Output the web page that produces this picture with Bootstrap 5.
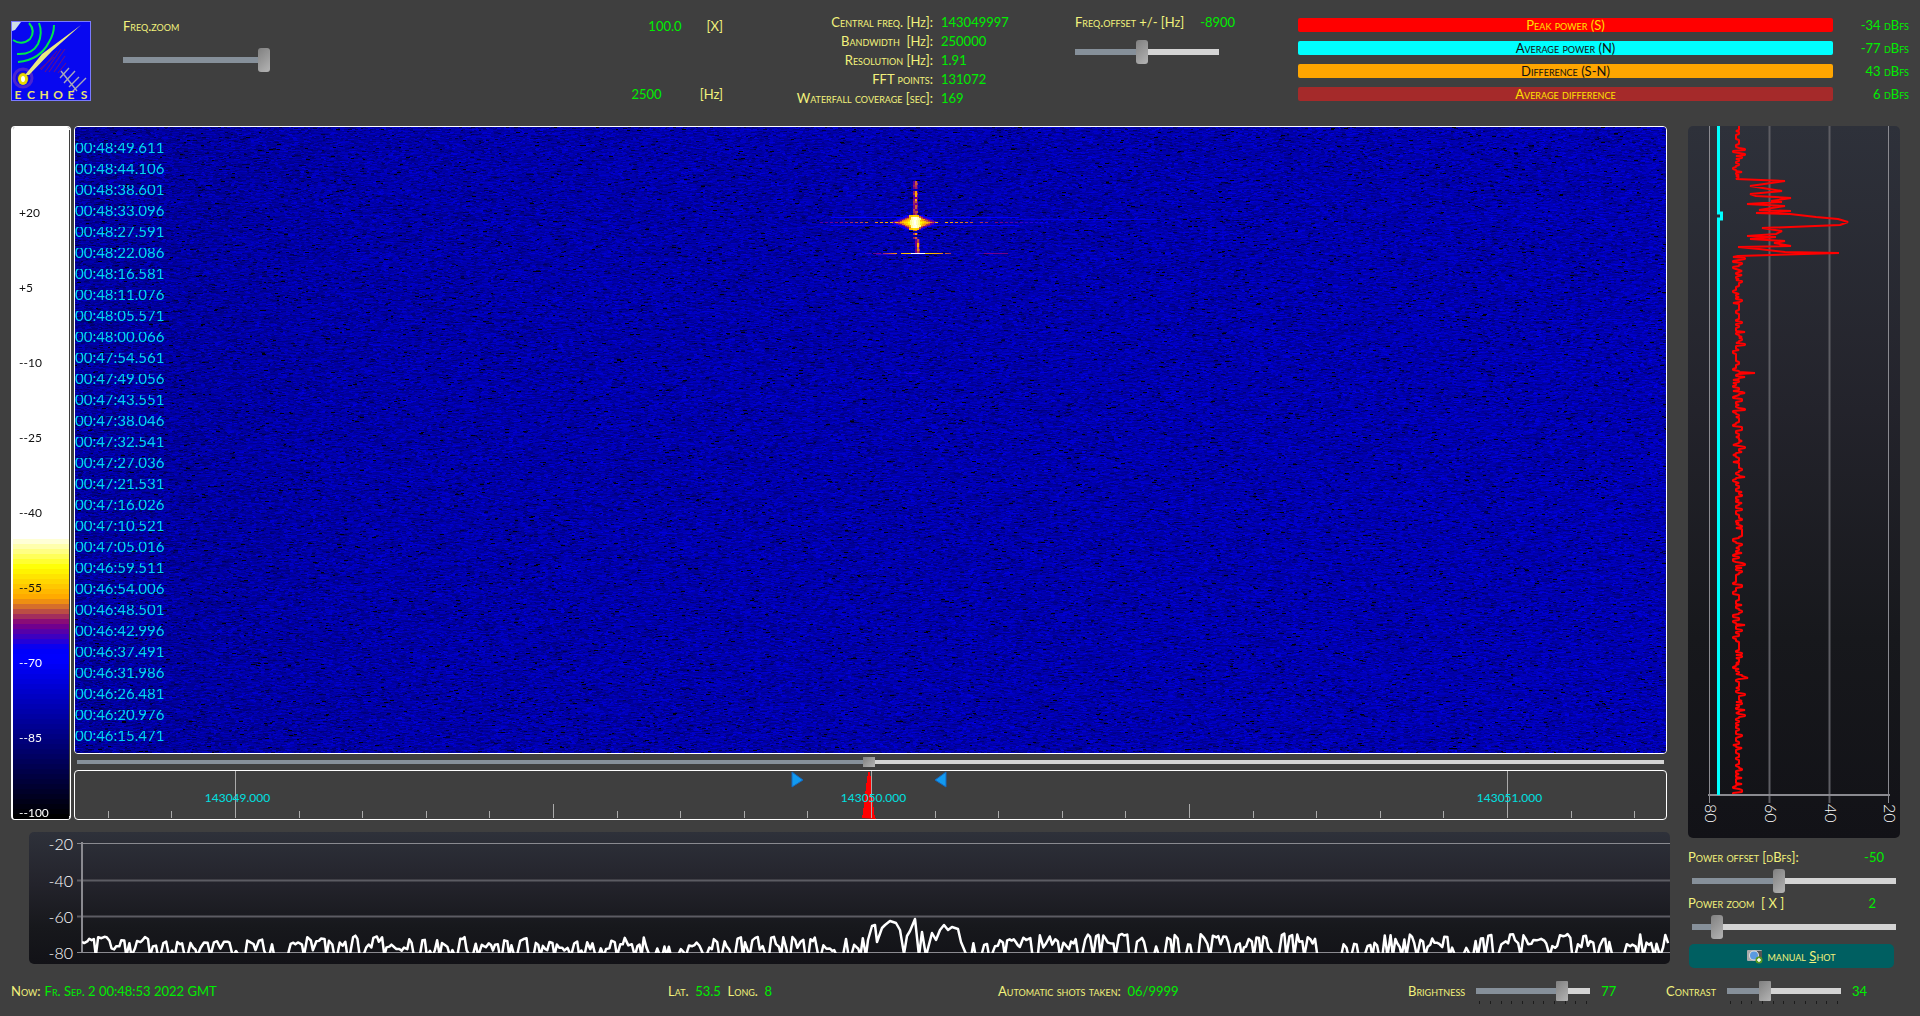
<!DOCTYPE html>
<html lang="en">
<head>
<meta charset="utf-8">
<meta name="viewport" content="width=device-width, initial-scale=1">
<title>Echoes</title>
<link rel="stylesheet" href="https://cdn.jsdelivr.net/npm/bootstrap@5.3.0/dist/css/bootstrap.min.css">
<style>
body{background:#3f3f3f;color:#f2f27c;font-family:Lato,sans-serif;font-size:13px;line-height:20px}
.cap{font-variant:small-caps;white-space:pre}
.val{color:#00ee00}
.top-bar{display:grid;grid-template-columns:112px 600fr 352fr 223fr 611fr;height:126px;padding:0 11px}
.logo{width:80px;height:80px;margin-top:21px}
.info-list{padding-top:13px}
.info-line{line-height:19px}
.info-name{width:210px;text-align:right}
.meter{height:14px;line-height:14px;border-radius:2px;width:535px;flex-shrink:1;text-align:center}
.meter-peak{background:#f00;color:#ffe000}
.meter-avg{background:#0ff;color:#111}
.meter-diff{background:#ffa500;color:#111}
.meter-avgdiff{background:#a52a2a;color:#ffe000}
.meter-list{padding-top:18px;gap:9px}
.meter-val{line-height:14px}
.zoom-vals{padding:16px 0 22px}
.gap-mid{width:38px}.gap-small{width:25px}
.slide{appearance:none;-webkit-appearance:none;display:block;width:100%;height:24px;margin:0;background:linear-gradient(90deg,#86909a var(--p),#d4d4d4 var(--p)) center/100% 6px no-repeat}
.slide::-webkit-slider-thumb{-webkit-appearance:none;width:12px;height:24px;border-radius:3px;background:linear-gradient(135deg,#808080,#b4b4b4)}
.slide-short{height:20px}
.slide-short::-webkit-slider-thumb{height:20px;border-radius:1px}
.slide-thin{height:10px;background-size:100% 4px}
.slide-thin::-webkit-slider-thumb{height:10px;border-radius:0}
.w-zoom{width:147px}
.w-zoom .slide{margin-top:12px}
.w-foot{width:114px;padding-top:3px}
.offset-box{padding-top:12px}
.offset-box .slide{margin-top:8px;width:144px}
.tick-row{height:3px;padding:0 3px}
.tick-row i{width:1px;background:#1c1c1c}
.wf-row{gap:3px;margin-right:5px;padding-left:11px}
.wf-col>.slide-thin{width:auto;margin:3px}
.frame{border:1px solid #fff;border-radius:4px;overflow:hidden;position:relative}
.frame canvas,.frame svg,.plot svg{position:absolute;top:0;left:0;width:100%;height:100%;display:block}
.scale-box{width:60px;border-width:1px 1px 1px 2px}
.scale-text{position:absolute;left:6px;line-height:20px;color:#111;font-size:12px;transform:translateY(-50%)}
.scale-text.pale{color:#fff}
.times{position:relative;padding-top:16px;color:#00d8f0;font-size:15px}
.times li{height:10px;line-height:8px;margin-bottom:11px;overflow:hidden}
.ruler{height:50px}
.plot{position:relative;border-radius:5px;overflow:hidden;background:linear-gradient(#2e313a,#23232b 40%,#17181c 72%,#121217)}
.plot-low{height:132px;margin:12px 2px 6px 29px}
.side{width:212px;margin-right:20px}
.side-ctl{padding:9px 0 2px}
.ctl-slide{padding:2px 4px 0}
.btn-shot{height:24px;width:205px;margin:5px 0 0 1px;padding:0;background:#005f61;color:#f2f27c;border:0;border-radius:5px;font-size:13px;line-height:20px}
.btn-shot:hover{background:#007072;color:#f2f27c}
.foot{display:grid;grid-template-columns:657fr 330fr 410fr 258fr 243fr;height:46px;padding:0 11px 4px;align-items:center}
.foot-ctl{gap:11px}
</style>
<script src="https://cdn.jsdelivr.net/npm/bootstrap@5.3.0/dist/js/bootstrap.bundle.min.js"></script>
</head>
<body class="d-flex flex-column min-vh-100">

<header class="top-bar">
  <svg class="logo" viewBox="0 0 80 80" role="img" aria-label="Echoes">
    <rect width="80" height="80" fill="#7a7aff"/><rect x="1" y="1" width="78" height="78" fill="#0808f0"/>
    <path d="M1 10V1H10L4 9Z" fill="#cfe0e8"/>
    <path d="M2 19q9 6 17-1q6-8-1-16M6 33q15 1 21-10q5-11 1-21M7 41q22-2 31-20q5-8 5-17" fill="none" stroke="#00e64d" stroke-width="2"/>
    <path d="M43 36L29 48M46 30L30 49M50 28L34 51M54 28L38 51M54 35L43 51M55 42L47 52" stroke="#70107c" stroke-width="1"/>
    <circle cx="12" cy="57" r="9" fill="none" stroke="#4a24d0" stroke-width="3"/><circle cx="12" cy="57" r="6" fill="#3a20a0"/>
    <path d="M70 4L31 33L14 54L18 54L41 30Z" fill="#e8e884"/>
    <ellipse cx="12" cy="58" rx="5" ry="6" fill="#e6d800"/><ellipse cx="12" cy="58" rx="2" ry="3" fill="#fff"/>
    <path d="M50 50L66 70M49 57L58 47M53 62L64 50M58 66L68 56M61 71L75 57" fill="none" stroke="#a8a8b8" stroke-width="1.4"/>
    <g font-family="Lato" font-weight="700" font-size="12" fill="#e8e070" text-anchor="middle"><text x="7" y="78">E</text><text x="20" y="78">C</text><text x="33" y="78">H</text><text x="47" y="78">O</text><text x="60" y="78">E</text><text x="73" y="78">S</text></g>
  </svg>
  <div class="d-flex justify-content-between">
    <div class="w-zoom">
      <label class="cap d-block mt-3" for="fz">Freq.zoom</label>
      <input class="slide" id="fz" type="range" min="0" max="100" value="100" style="--p:95%">
    </div>
    <div class="d-flex flex-column justify-content-between zoom-vals">
      <div class="d-flex justify-content-end"><span class="val">100.0</span><span class="gap-small"></span><span>[X]</span></div>
      <div class="d-flex justify-content-end"><span class="val">2500</span><span class="gap-mid"></span><span>[Hz]</span></div>
    </div>
  </div>
  <div class="info-list">
    <div class="d-flex info-line"><span class="cap info-name">Central freq. [Hz]:</span><span class="val ms-2">143049997</span></div>
    <div class="d-flex info-line"><span class="cap info-name">Bandwidth  [Hz]:</span><span class="val ms-2">250000</span></div>
    <div class="d-flex info-line"><span class="cap info-name">Resolution [Hz]:</span><span class="val ms-2">1.91</span></div>
    <div class="d-flex info-line"><span class="cap info-name">FFT points:</span><span class="val ms-2">131072</span></div>
    <div class="d-flex info-line"><span class="cap info-name">Waterfall coverage [sec]:</span><span class="val ms-2">169</span></div>
  </div>
  <div class="offset-box">
    <div class="d-flex gap-3"><label class="cap" for="fo">Freq.offset +/- [Hz]</label><span class="val">-8900</span></div>
    <input class="slide" id="fo" type="range" min="0" max="100" value="46" style="--p:46%">
  </div>
  <div class="d-flex flex-column meter-list">
    <div class="d-flex justify-content-between"><div class="meter meter-peak cap">Peak power (S)</div><span class="val cap meter-val">-34 dBfs</span></div>
    <div class="d-flex justify-content-between"><div class="meter meter-avg cap">Average power (N)</div><span class="val cap meter-val">-77 dBfs</span></div>
    <div class="d-flex justify-content-between"><div class="meter meter-diff cap">Difference (S-N)</div><span class="val cap meter-val">43 dBfs</span></div>
    <div class="d-flex justify-content-between"><div class="meter meter-avgdiff cap">Average difference</div><span class="val cap meter-val">6 dBfs</span></div>
  </div>
</header>

<main class="d-flex flex-fill gap-3">
  <div class="d-flex flex-column flex-fill">
    <div class="d-flex flex-fill wf-row">
      <div class="frame scale-box" id="scale"><canvas></canvas></div>
      <div class="d-flex flex-column flex-fill wf-col">
        <div class="frame flex-fill" id="wf"><canvas></canvas><ul class="times list-unstyled mb-0" id="times"></ul></div>
        <input class="slide slide-thin" aria-label="Waterfall position" type="range" min="0" max="1000" value="499" style="--p:50%">
        <div class="frame ruler" id="ruler"></div>
      </div>
    </div>
    <div class="plot plot-low" id="low"></div>
  </div>
  <aside class="side d-flex flex-column">
    <div class="plot flex-fill" id="power"></div>
    <div class="side-ctl">
      <div class="d-flex justify-content-between"><label class="cap" for="po">Power offset [dBfs]:</label><span class="val me-3">-50</span></div>
      <div class="ctl-slide"><input class="slide" id="po" type="range" min="0" max="100" value="42" style="--p:42%"></div>
      <div class="d-flex justify-content-between"><label class="cap" for="pz">Power zoom  [ X ]</label><span class="val me-4">2</span></div>
      <div class="ctl-slide"><input class="slide" id="pz" type="range" min="0" max="100" value="10" style="--p:10%"></div>
      <button class="btn btn-shot cap d-flex align-items-center justify-content-center gap-1" type="button"><svg width="16" height="16" viewBox="0 0 16 16" aria-hidden="true"><rect x="0" y="2" width="15" height="11" rx="1" fill="#aaa"/><rect x="10" y="3" width="5" height="9" fill="#555"/><circle cx="7" cy="7.500" r="5" fill="#ddd"/><circle cx="7" cy="7.500" r="4" fill="#5b9ae0"/><circle cx="12" cy="12" r="3.500" fill="#5a9a20"/><path d="M12 10v4M10 12h4" stroke="#fff" stroke-width="1.400"/></svg><span>manual <u>S</u>hot</span></button>
    </div>
  </aside>
</main>

<footer class="foot">
  <div class="d-flex gap-1"><span class="cap">Now:</span><span class="val cap">Fr. Sep. 2 00:48:53 2022 GMT</span></div>
  <div class="cap">Lat. <span class="val"> 53.5</span>  Long. <span class="val"> 8</span></div>
  <div class="cap">Automatic shots taken: <span class="val"> 06/9999</span></div>
  <div class="d-flex align-items-center foot-ctl"><label class="cap" for="br">Brightness</label>
    <div class="w-foot"><input class="slide slide-short" id="br" type="range" min="0" max="100" value="78" style="--p:77%"><div class="tick-row d-flex justify-content-between"><i></i><i></i><i></i><i></i><i></i><i></i><i></i><i></i><i></i><i></i><i></i></div></div><span class="val">77</span></div>
  <div class="d-flex align-items-center foot-ctl"><label class="cap" for="co">Contrast</label>
    <div class="w-foot"><input class="slide slide-short" id="co" type="range" min="0" max="100" value="31" style="--p:34%"><div class="tick-row d-flex justify-content-between"><i></i><i></i><i></i><i></i><i></i><i></i><i></i><i></i><i></i><i></i><i></i></div></div><span class="val">34</span></div>
</footer>

<script>
var seed = 7;
function rnd(){ seed = (seed * 1664525 + 1013904223) >>> 0; return seed / 4294967296; }

// waterfall palette, value 0..1
var stops = [[0,0,0,0],[.56,0,0,255],[.60,0,0,250],[.69,128,0,128],[.78,255,165,0],[.89,255,255,0],[1,255,255,255]];
function colour(v){
  v = Math.max(0, Math.min(1, v));
  for (var i = 1; i < stops.length; i++) if (v <= stops[i][0]) {
    var a = stops[i-1], b = stops[i], t = (v - a[0]) / (b[0] - a[0]);
    return [1,2,3].map(function(k){ return Math.round(a[k] + (b[k] - a[k]) * t); });
  }
  return [255,255,255];
}

function drawScale(){
  var box = document.getElementById('scale'), c = box.querySelector('canvas');
  var w = c.width = box.clientWidth, h = c.height = box.clientHeight, g = c.getContext('2d');
  g.fillStyle = '#fff'; g.fillRect(0, 0, w, h);
  for (var y = h, n = 0; n < 56; n++, y -= 5) {
    g.fillStyle = 'rgb(' + colour(n / 56).join() + ')'; g.fillRect(0, y - 5, w - 1, 5);
  }
  g.fillStyle = '#3f3f3f'; g.fillRect(w - 1, 3, 1, h - 6);
  for (var i = 0; i < 9; i++) {
    var s = document.createElement('span'), db = 20 - 15 * i;
    s.className = 'scale-text' + (db <= -70 ? ' pale' : '');
    s.style.top = (h - 6 - (8 - i) * 75) + 'px';
    s.textContent = db > 0 ? '+' + db : '--' + (-db);
    box.appendChild(s);
  }
}

function drawWaterfall(){
  var box = document.getElementById('wf'), c = box.querySelector('canvas');
  var w = c.width = box.clientWidth, h = c.height = box.clientHeight, g = c.getContext('2d');
  var im = g.createImageData(w, h), k = w / 1591;
  var cx = Math.round(841 * k);
  for (var y = 0; y < h; y++) {
    var hold = 0, b = 160;
    for (var x = 0; x < w; x++) {
      if (hold-- <= 0) {
        hold = 1 + Math.floor(rnd() * 3);
        var r = rnd(), base = 166 - (x < 300 ? 12 * (1 - x / 300) : 0) + 10 * x / w;
        b = base + (rnd() + rnd() - 1) * 58;
        if (r < .03) b = 60 + rnd() * 40; else if (r < .038) b = 8;
      }
      var o = (y * w + x) * 4;
      im.data[o+2] = b; im.data[o+3] = 255;
    }
  }
  g.putImageData(im, 0, 0);
  function cell(x, y, cw, ch, v){ g.fillStyle = 'rgb(' + colour(v).join() + ')'; g.fillRect(Math.round(x), y, cw, ch); }
  // head echo trail
  for (y = 54; y < 126; y += 2) {
    if (rnd() < .15) continue;
    var dx = y > 110 ? 2 : 0, hot = rnd() * .12;
    cell(cx - 3 + dx, y, 2, 2, .64 + rnd() * .1); cell(cx - 1 + dx, y, 2, 2, .68 + hot); cell(cx + 1 + dx, y, 1, 2, .62 + rnd() * .12);
  }
  for (x = -85; x < 100; x += 4) { cell(cx + x, 90, 4, 1, .57); cell(cx + x, 98, 4, 1, .56); }
  for (x = 100; x < 240; x += 4) cell(cx + x, 92, 4, 1, .50);
  // burst core, widening towards its middle row
  for (y = 88; y < 103; y++) {
    var d = Math.abs(y - 95), half = Math.max(6, 24 - d * 2.2);
    for (x = -half; x < half; x += 2) {
      var a = Math.abs(x), v = .96 - a / half * .36 - d * .016 + rnd() * .05;
      if (a < 5) v = 1 - (d > 5 ? .14 : 0) - a * .012;
      cell(cx - 2 + x, y, 2, 1, v);
    }
  }
  for (x = -96; x < 130; x += 5) if (Math.abs(x) > 18 && rnd() < .85) cell(cx + x, 95, 3, 1, .84 - Math.abs(x) * .0019);
  for (x = -54; x < 34; x += 2) if (rnd() < .88) cell(cx + 1 + x, 126, 2, 1, Math.abs(x) < 8 ? 1 : .88 - Math.abs(x) * .005);
  cell(cx + 68, 126, 24, 1, .68); cell(cx - 40, 127, 20, 1, .63); cell(cx + 60, 126, 8, 1, .62);
  cell(cx - 10, 246, 12, 1, .62);

  var list = document.getElementById('times'), t = 48 * 60000 + 49611;
  for (var i = 0; i < 29; i++, t -= 5505) {
    var li = document.createElement('li'), m = Math.floor(t / 60000), s = ((t % 60000) / 1000).toFixed(3);
    li.textContent = '00:' + m + ':' + ('0' + s).slice(-6);
    list.appendChild(li);
  }
}

function svg(id, fill){ var b = document.getElementById(id), w = b.clientWidth, h = b.clientHeight;
  b.innerHTML = '<svg width="' + w + '" height="' + h + '" font-family="Lato, sans-serif">' + fill(w, h) + '</svg>'; }
function line(x1, y1, x2, y2, col, sw){ return '<path d="M' + x1 + ' ' + y1 + 'L' + x2 + ' ' + y2 + '" stroke="' + col + '" stroke-width="' + sw + '"/>'; }

function ruler(w, h){
  var k = w / 1591, s = '', c = Math.round(796 * k), o = '';
  s += '<path d="M' + (c - 9) + ' 47v-3h1v-7h1v-8h1v-9h1v-8h1v-7h1v-4h2v4h1v14h1v8h1v9h1v8h1v3h1v1z" fill="#f00"/>';
  for (var i = -12; i <= 12; i++) { var x = Math.round(c + i * 63.6 * k) + .5;
    if (i % 10 === 0) { s += line(x, 0, x, 47, '#aaa', 1); o += '<text x="' + (x + 2) + '" y="31" font-size="12" text-anchor="middle" fill="#00e0e0">' + (143050 + i / 10) + '.000</text>'; }
    else s += line(x, i % 5 === 0 ? 33 : 40, x, 47, '#aaa', 1); }
  var a = 717 * k, b = 871 * k;
  s += '<path d="M' + a + ' 1v15l11-7z" fill="#129af0" stroke="#1468c0"/><path d="M' + b + ' 1v15l-11-7z" fill="#129af0" stroke="#1468c0"/>';
  return s + o;
}
function low(w, h){
  var k = w / 1641, s = '', ax = 53;
  [20,40,60,80].forEach(function(v, i){ var y = [11,48,84,120][i] + .5;
    s += line(ax - 5, y, w, y, i === 0 || i === 3 ? '#8a8a90' : '#5c5c63', i === 0 || i === 3 ? 1 : 2) + '<text x="44" y="' + (y + 6) + '" font-size="16" font-weight="300" text-anchor="end" fill="#fff">-' + v + '</text>'; });
  s += line(ax, 10, ax, 121, '#8a8a90', 2);
  var p = [], x = ax, end = 838 * k, burst = [[839,108],[843,94],[846,93],[848,110],[853,96],[856,93],[861,89],[867,91],[871,98],[875,122],[878,104],[881,99],[886,87],[890,124],[893,100],[897,124],[903,101],[907,108],[911,98],[915,93],[919,98],[923,95],[929,97],[932,110],[937,122]];
  function noise(to, lift){ while (x < to) { var top = 105 + rnd() * 14 - lift; if (rnd() < .42) top = 124; p.push([x, top]); x += 2 + rnd() * 1.6; if (top < 118 && rnd() < .5) { p.push([x, top + rnd() * 6 - 2]); x += 2; } } }
  noise(end, 0);
  burst.forEach(function(q){ p.push([q[0] * k, q[1]]); });
  x = 940 * k; noise(w, 3);
  s += '<clipPath id="cp"><rect x="' + ax + '" y="0" width="' + w + '" height="121"/></clipPath><polyline clip-path="url(#cp)" fill="none" stroke="#fff" stroke-width="2.500" stroke-linejoin="round" points="' + p.join(' ') + '"/>';
  return s;
}
function power(w, h){
  var s = '', base = h - 43;
  [80,60,40,20].forEach(function(v, i){ var x = [21,81,141,200][i] + .5;
    s += line(x, 0, x, base + 8, i % 3 ? '#5d5d63' : '#8a8a90', i % 3 ? 2 : 1) + '<text transform="translate(' + (x - 5) + ' ' + (base + 9) + ') rotate(90)" font-size="16" font-weight="300" fill="#fff">' + v + '</text>'; });
  s += line(20, base, 202, base, '#8a8a90', 2);
  s += '<path d="M30.5 0V87h3V93h-3V' + base + '" fill="none" stroke="#0ff" stroke-width="3"/>';
  var p = [], peak = [[48,53],[97,55],[62,60],[94,65],[62,68],[68,70],[103,72],[83,75],[94,76],[59,78],[97,80],[71,84],[103,85],[68,87],[102,88],[128,91],[150,93],[160,96],[152,99],[74,102],[94,105],[88,108],[59,110],[88,111],[62,113],[97,115],[86,117],[103,120],[50,121],[71,123],[97,126],[151,127],[50,130]];
  function run(a, b){ for (var y = a; y < b; y += 1) { var r = rnd(), v = r < .12 ? 45 : r < .5 ? 48 : r < .84 ? 51 : r < .96 ? 54 : 57; p.push([v, y]); if (rnd() < .5) { y += 1; p.push([v, y]); } } }
  run(0, 52); p = p.concat(peak); run(131, 246); p.push([67,247],[51,248]); run(249, 551); p.push([60,552]); run(553, base - 1);
  return s + '<polyline fill="none" stroke="#f00" stroke-width="2" stroke-linejoin="bevel" points="' + p.join(' ') + '"/>';
}
drawScale(); drawWaterfall(); svg('ruler', ruler); svg('low', low); svg('power', power);
</script>
</body>
</html>
